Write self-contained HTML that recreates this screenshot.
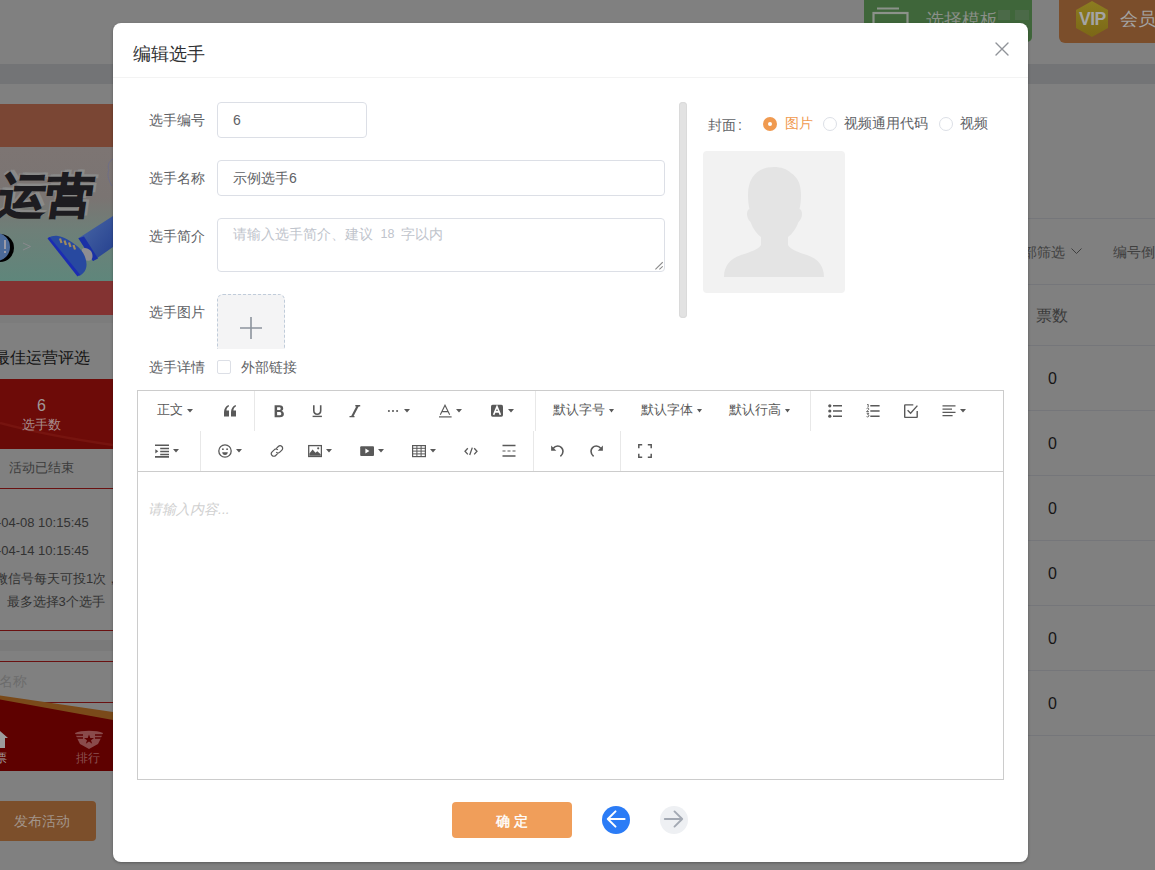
<!DOCTYPE html>
<html><head><meta charset="utf-8">
<style>
*{box-sizing:border-box;margin:0;padding:0}
html,body{width:1155px;height:870px;overflow:hidden}
body{position:relative;background:#808080;font-family:"Liberation Sans",sans-serif;color:#606266}
.a{position:absolute}
.t{position:absolute;white-space:nowrap;line-height:1}
/* background page (already dimmed colours) */
#bg{position:absolute;left:0;top:0;width:1155px;height:870px;overflow:hidden;background:#808080}
#modal{position:absolute;left:113px;top:23px;width:915px;height:839px;background:#fff;border-radius:8px;box-shadow:0 1px 3px rgba(0,0,0,.3);overflow:hidden}
.lbl{left:35.7px;width:56px;text-align:right;font-size:14px;color:#606266}
.inp{border:1px solid #dcdfe6;border-radius:4px;background:#fff}
</style></head>
<body>
<div id="bg">
  <!-- top header band -->
  <div class="a" style="left:0;top:64px;width:1155px;height:20px;background:#737476"></div>
  <!-- green template button -->
  <div class="a" style="left:864px;top:-6px;width:168px;height:48px;background:#3f663a;border-radius:5px"></div>
  <svg class="a" style="left:872px;top:7px" width="37" height="20" viewBox="0 0 37 20"><path d="M5 1.5H27" stroke="#8c928a" stroke-width="2"/><rect x="1.5" y="6" width="34" height="20" stroke="#8c928a" stroke-width="2.2" fill="none"/></svg>
  <div class="t" style="left:926px;top:10.5px;font-size:18px;line-height:18px;color:#8a8f88">选择模板</div>
  <div class="a" style="left:998px;top:10px;width:12px;height:10px;background:#4b6a48"></div>
  <div class="a" style="left:1015px;top:10px;width:14px;height:10px;background:#4b6a48"></div>
  <!-- vip button -->
  <div class="a" style="left:1059px;top:-6px;width:110px;height:49px;background:#7b4e2b;border-radius:6px"></div>
  <svg class="a" style="left:1075px;top:0" width="34" height="38" viewBox="0 0 34 38"><defs><linearGradient id="hx" x1="0" y1="0" x2="0" y2="1"><stop offset="0" stop-color="#8c7d20"/><stop offset="1" stop-color="#7b6716"/></linearGradient></defs><path d="M17 1L33 10V28L17 37L1 28V10Z" fill="url(#hx)"/></svg>
  <div class="t" style="left:1079px;top:10px;font-size:17.5px;line-height:18px;font-weight:bold;color:#a4a4a4;letter-spacing:-0.5px">VIP</div>
  <div class="t" style="left:1120px;top:10px;font-size:18px;line-height:18px;color:#a4a4a4">会员</div>

  <!-- phone preview column -->
  <div class="a" style="left:0;top:104px;width:113px;height:43px;background:#7a4634"></div>
  <div class="a" style="left:0;top:147px;width:113px;height:134px;background:linear-gradient(#7d7573 0%,#7a7472 38%,#6e7f78 62%,#5f867b 100%)"></div>
  <div class="t" style="left:-1px;top:167.5px;font-size:47px;line-height:56px;font-weight:900;color:#1d1c20;-webkit-text-stroke:1.5px #1d1c20;transform:skewX(-8deg);text-shadow:4px -3px 0 #8a8a89,2px -3px 0 #8a8a89,-2px -2px 0 #8a8786">运营</div>
  <div class="a" style="left:-20px;top:234px;width:34px;height:28px;border-radius:14px;background:#000"></div>
  <div class="a" style="left:-24px;top:233px;width:34px;height:28px;border-radius:14px;background:#4c6a99"></div>
  <div class="a" style="left:4px;top:240px;width:2px;height:9px;background:#9a9aa8"></div>
  <div class="a" style="left:4px;top:251px;width:2px;height:2px;background:#9a9aa8"></div>
  <svg class="a" style="left:22px;top:242px" width="10" height="9" viewBox="0 0 10 9"><path d="M1 1L8.5 4.5L1 8" stroke="#8a8a8e" stroke-width="1" fill="none"/></svg>
  <svg class="a" style="left:46px;top:214px" width="67" height="64" viewBox="0 0 67 64"><defs><linearGradient id="pl" x1="0" y1="0" x2="1" y2="1"><stop offset="0" stop-color="#4a68a6"/><stop offset="1" stop-color="#243f8e"/></linearGradient></defs><path d="M32.4 24.3L67 2V33L47 47Z" fill="url(#pl)"/><path d="M32.4 24.3L38 22.5L52 44.5L47 47Z" fill="#1a30a6"/><path d="M36 35C38 33 42 34 45 37C47 40 47 44 45 46C42 48 38 46 36 43Z" fill="#8f8d92"/><path d="M2 24C5 22 9 21.5 12 22C18 23 25 27 31 32C36 36 40 42 40.5 50C40.8 55 38 60 33 62Z" fill="#2849a0"/><path d="M1.5 24.5L3.5 23L34 60.5L31.5 62.5Z" fill="#1b2cb2"/><path d="M14 24.5L15.5 29M18.5 26.5L20 31M23 28.5L24.5 33M27.5 31L29 35.5" stroke="#a08c5c" stroke-width="2.2"/></svg>
  <svg class="a" style="left:106px;top:158px" width="8" height="30" viewBox="0 0 8 30"><path d="M7 1C3 3 1 8 3 12C1 16 2 22 6 28" stroke="#6e6e88" stroke-width="1" fill="none"/></svg>
  <div class="a" style="left:0;top:281px;width:113px;height:34px;background:#833332"></div>
  <div class="a" style="left:0;top:315px;width:113px;height:8px;background:#7c7c7c"></div>
  <div class="t" style="left:-6.5px;top:350px;font-size:16px;color:#141414">最佳运营评选</div>
  <div class="a" style="left:0;top:379px;width:113px;height:70px;background:#6d0b08;overflow:hidden">
    <svg class="a" style="left:0;top:0" width="113" height="70" viewBox="0 0 113 70"><path d="M0 44C30 52 70 60 113 66V70H0Z" fill="#680a07"/><path d="M0 44C30 52 70 60 113 66" stroke="#76140f" stroke-width="2.5" fill="none"/></svg>
  </div>
  <div class="t" style="left:37px;top:398px;font-size:16px;color:#a09898">6</div>
  <div class="t" style="left:22px;top:417.5px;font-size:13px;color:#a88f8d">选手数</div>
  <div class="t" style="left:9px;top:461px;font-size:13px;color:#3c3c3c">活动已结束</div>
  <div class="a" style="left:0;top:488px;width:113px;height:1px;background:#6a1111"></div>
  <div class="t" style="left:-32px;top:516px;font-size:13px;color:#323232">2021-04-08 10:15:45</div>
  <div class="t" style="left:-32px;top:544px;font-size:13px;color:#323232">2021-04-14 10:15:45</div>
  <div class="t" style="left:-5px;top:572px;font-size:13px;color:#323232">微信号每天可投1次，</div>
  <div class="t" style="left:6.5px;top:595px;font-size:13px;color:#323232">最多选择3个选手</div>
  <div class="a" style="left:0;top:630px;width:113px;height:1px;background:#6a1111"></div>
  <div class="a" style="left:0;top:640px;width:113px;height:11px;background:#7a7a7a"></div>
  <div class="a" style="left:0;top:661px;width:113px;height:1px;background:#6a1111"></div>
  <div class="t" style="left:-1px;top:674px;font-size:14px;color:#6c6c6c">名称</div>
  <div class="a" style="left:0;top:702px;width:113px;height:1px;background:#6a1111"></div>
  <svg class="a" style="left:0;top:694px" width="113" height="78" viewBox="0 0 113 78"><path d="M0 1.5L113 18V77H0Z" fill="#7a4a1a"/><path d="M0 5.5L113 26V77H0Z" fill="#5e0100"/></svg>
  <svg class="a" style="left:-8px;top:730px" width="16" height="19" viewBox="0 0 16 19"><path d="M0 8L8 1L16 8H13V18H3V8Z" fill="#9c9c9c"/></svg>
  <svg class="a" style="left:74px;top:730px" width="30" height="20" viewBox="0 0 30 20"><path d="M1 3C7 0 23 0 29 3L27 8L24 14L15 19L6 14L3 8Z" fill="#8a4b4b"/><path d="M1 5H9M2 8H9M21 5H29M21 8H28" stroke="#5e0100" stroke-width="1.3"/><path d="M15 4.5L16.3 8H20L17 10.2L18.2 13.8L15 11.6L11.8 13.8L13 10.2L10 8H13.7Z" fill="#5e0100"/></svg>
  <div class="t" style="left:76px;top:752px;font-size:12px;color:#8c5353">排行</div>
  <div class="t" style="left:-5px;top:752px;font-size:12px;color:#a0a0a0">票</div>
  <div class="a" style="left:-10px;top:801px;width:106px;height:40px;background:#7c4f2b;border-radius:4px"></div>
  <div class="t" style="left:14px;top:814px;font-size:14px;color:#a3958a">发布活动</div>

  <!-- table on right -->
  <div class="a" style="left:1028px;top:218px;width:127px;height:1px;background:#75767a"></div>
  <div class="t" style="left:1009px;top:245px;font-size:14px;color:#3f3f3f">全部筛选</div>
  <svg class="a" style="left:1071px;top:248px" width="11" height="7" viewBox="0 0 11 7"><path d="M0.5 0.5L5.5 5.5L10.5 0.5" stroke="#3f3f3f" stroke-width="1" fill="none"/></svg>
  <div class="t" style="left:1113px;top:245px;font-size:14px;color:#3f3f3f">编号倒序</div>
  <div class="a" style="left:1028px;top:284px;width:127px;height:1px;background:#75767a"></div>
  <div class="t" style="left:1036px;top:308px;font-size:16px;color:#3b3b3b">票数</div>
  <div class="a" style="left:1028px;top:345px;width:127px;height:1px;background:#75767a"></div>
  <div class="t" style="left:1048px;top:371px;font-size:16px;color:#161616">0</div>
  <div class="a" style="left:1028px;top:410px;width:127px;height:1px;background:#75767a"></div>
  <div class="t" style="left:1048px;top:436px;font-size:16px;color:#161616">0</div>
  <div class="a" style="left:1028px;top:475px;width:127px;height:1px;background:#75767a"></div>
  <div class="t" style="left:1048px;top:501px;font-size:16px;color:#161616">0</div>
  <div class="a" style="left:1028px;top:540px;width:127px;height:1px;background:#75767a"></div>
  <div class="t" style="left:1048px;top:566px;font-size:16px;color:#161616">0</div>
  <div class="a" style="left:1028px;top:605px;width:127px;height:1px;background:#75767a"></div>
  <div class="t" style="left:1048px;top:631px;font-size:16px;color:#161616">0</div>
  <div class="a" style="left:1028px;top:670px;width:127px;height:1px;background:#75767a"></div>
  <div class="t" style="left:1048px;top:696px;font-size:16px;color:#161616">0</div>
  <div class="a" style="left:1028px;top:735px;width:127px;height:1px;background:#75767a"></div>
</div>

<div id="modal">
  <div class="t" style="left:20px;top:22px;font-size:18px;line-height:18px;color:#303133">编辑选手</div>
  <svg class="a" style="left:881.6px;top:18.6px" width="14" height="14" viewBox="0 0 14 14"><path d="M1 1L13 13M13 1L1 13" stroke="#909399" stroke-width="1.4" fill="none" stroke-linecap="round"/></svg>
  <div class="a" style="left:0;top:54px;width:915px;height:1px;background:#f3f3f3"></div>

  <!-- form -->
  <div class="t lbl" style="top:90px">选手编号</div>
  <div class="a inp" style="left:104px;top:79px;width:150px;height:36px"><span class="t" style="left:15px;top:10px;font-size:14px;color:#606266">6</span></div>
  <div class="t lbl" style="top:148px">选手名称</div>
  <div class="a inp" style="left:104px;top:137px;width:448px;height:36px"><span class="t" style="left:15px;top:10px;font-size:14px;color:#606266">示例选手6</span></div>
  <div class="t lbl" style="top:206px">选手简介</div>
  <div class="a inp" style="left:104px;top:195px;width:448px;height:54px"><span class="t" style="left:15px;top:8px;font-size:14px;color:#c0c4cc">请输入选手简介、建议</span><span class="t" style="left:162.5px;top:9px;font-size:12.5px;color:#c0c4cc">18</span><span class="t" style="left:182.5px;top:8px;font-size:14px;color:#c0c4cc">字以内</span>
    <svg class="a" style="right:1px;bottom:1px" width="9" height="9" viewBox="0 0 9 9"><path d="M8.7 1.2L1.4 8.4M8.7 5.3L5.4 8.4" stroke="#8a8a8a" stroke-width="1.1"/></svg></div>
  <div class="t lbl" style="top:282px">选手图片</div>
  <div class="a" style="left:104px;top:271px;width:68px;height:55px;overflow:hidden"><div class="a" style="left:0;top:0;width:68px;height:68px;border:1px dashed #c0ccda;border-radius:6px;background:#f4f4f5"></div>
    <svg class="a" style="left:22px;top:22px" width="24" height="24" viewBox="0 0 24 24"><path d="M12 1V23M1 12H23" stroke="#8c939d" stroke-width="1.6"/></svg></div>
  <div class="t lbl" style="top:337px">选手详情</div>
  <div class="a" style="left:104px;top:337px;width:14px;height:14px;border:1px solid #dcdfe6;border-radius:2px;background:#fff"></div>
  <div class="t" style="left:127.7px;top:337px;font-size:14px;color:#606266">外部链接</div>
  <div class="a" style="left:566px;top:79px;width:8px;height:216px;border-radius:4px;background:#e2e2e2;box-shadow:inset 0 0 0 1px #dadada"></div>

  <!-- cover -->
  <div class="t" style="left:595px;top:95px;font-size:14px;color:#606266">封面</div><div class="t" style="left:625px;top:95px;font-size:14px;color:#606266">:</div>
  <div class="a" style="left:650px;top:94px;width:14px;height:14px;border-radius:50%;background:#f09a50"></div>
  <div class="a" style="left:655px;top:99px;width:4px;height:4px;border-radius:50%;background:#fff"></div>
  <div class="t" style="left:672px;top:93px;font-size:14px;color:#f09a50">图片</div>
  <div class="a" style="left:710px;top:94px;width:14px;height:14px;border-radius:50%;border:1px solid #dcdfe6;background:#fff"></div>
  <div class="t" style="left:731px;top:93px;font-size:14px;color:#606266">视频通用代码</div>
  <div class="a" style="left:826px;top:94px;width:14px;height:14px;border-radius:50%;border:1px solid #dcdfe6;background:#fff"></div>
  <div class="t" style="left:847px;top:93px;font-size:14px;color:#606266">视频</div>
  <div class="a" style="left:590px;top:128px;width:142px;height:142px;border-radius:4px;background:#f2f2f2">
    <svg class="a" style="left:0;top:0" width="142" height="142" viewBox="0 0 142 142"><path fill="#e4e4e4" d="M71 16C56 16 45 25 45 44C45 50 45.5 54 46.5 58C43 59 43 67 47.5 71C50 78 54 83 58 86L58 94C55 99 47 101 38 104C26 108 21 116 21 126L121 126C121 116 116 108 104 104C95 101 88 99 85 94L85 86C89 83 93 78 95.5 71C100 67 100 59 96.5 58C97.5 54 98 50 98 44C98 32 94 26 88 22C84 18 78 16 71 16Z"/></svg>
  </div>

  <!-- editor -->
  <div class="a" id="ed" style="left:24px;top:367px;width:867px;height:390px;border:1px solid #ccc">
    <!--TB--><div class="t" style="left:18.5px;top:12px;font-size:13px;line-height:14px;color:#595959">正文</div>
<svg class="a" style="left:49px;top:18px" width="6" height="4" viewBox="0 0 6 4"><path d="M0 0H6L3.0 3.6Z" fill="#595959"/></svg>
<svg class="a" style="left:85px;top:13px" width="14" height="14" viewBox="0 0 14 14"><path fill="#595959" d="M1 12.4V8.2C1 4.6 2.8 2.1 5.6 1L6.1 2.3C4.4 3.1 3.5 4.5 3.4 6.5H6V12.4Z M8 12.4V8.2C8 4.6 9.8 2.1 12.6 1L13.1 2.3C11.4 3.1 10.5 4.5 10.4 6.5H13V12.4Z"/></svg>
<div class="a" style="left:116px;top:0px;width:1px;height:40px;background:#e8e8e8"></div>
<svg class="a" style="left:134px;top:13px" width="14" height="14" viewBox="0 0 14 14"><path fill="#595959" fill-rule="evenodd" d="M2.6 1.3H7.4C10 1.3 11.2 2.5 11.2 4.4C11.2 5.7 10.5 6.5 9.5 6.9C10.9 7.2 11.9 8.3 11.9 10C11.9 12.1 10.4 13.3 7.8 13.3H2.6Z M5.1 3.3V6.1H7C8.2 6.1 8.7 5.6 8.7 4.7C8.7 3.8 8.2 3.3 7 3.3Z M5.1 8V11.3H7.3C8.7 11.3 9.3 10.7 9.3 9.65C9.3 8.6 8.7 8 7.3 8Z"/></svg>
<svg class="a" style="left:172px;top:13px" width="14" height="14" viewBox="0 0 14 14"><path d="M3.8 1.2V6.6C3.8 9 5.2 10.2 7.25 10.2C9.3 10.2 10.7 9 10.7 6.6V1.2" stroke="#595959" stroke-width="1.6" fill="none"/><path d="M2.6 12.4H11.9" stroke="#595959" stroke-width="1.4"/></svg>
<svg class="a" style="left:210px;top:13px" width="14" height="14" viewBox="0 0 14 14"><path d="M7.3 1.8H12.2M1.5 12.6H6.5" stroke="#595959" stroke-width="1.4" fill="none"/><path d="M8.6 1.8H11L5.4 12.6H3Z" fill="#595959"/></svg>
<svg class="a" style="left:248px;top:13px" width="14" height="14" viewBox="0 0 14 14"><circle cx="2.9" cy="7" r="1.05" fill="#595959"/><circle cx="7" cy="7" r="1.05" fill="#595959"/><circle cx="11.1" cy="7" r="1.05" fill="#595959"/></svg>
<svg class="a" style="left:266px;top:18px" width="6" height="4" viewBox="0 0 6 4"><path d="M0 0H6L3.0 3.6Z" fill="#595959"/></svg>
<svg class="a" style="left:300px;top:13px" width="14" height="14" viewBox="0 0 14 14"><path d="M2.3 10.8L7 1.2L11.7 10.8M3.8 7.6H10.2" stroke="#595959" stroke-width="1.1" fill="none"/><path d="M1 12.9H13.6" stroke="#595959" stroke-width="1.2"/></svg>
<svg class="a" style="left:318px;top:18px" width="6" height="4" viewBox="0 0 6 4"><path d="M0 0H6L3.0 3.6Z" fill="#595959"/></svg>
<svg class="a" style="left:352px;top:13px" width="14" height="14" viewBox="0 0 14 14"><rect x="1" y="0.8" width="12" height="11.9" rx="1.6" fill="#595959"/><path d="M3.6 10.9L7 2.6L10.4 10.9M4.9 7.9H9.1" stroke="#fff" stroke-width="1.6" fill="none"/></svg>
<svg class="a" style="left:370px;top:18px" width="6" height="4" viewBox="0 0 6 4"><path d="M0 0H6L3.0 3.6Z" fill="#595959"/></svg>
<div class="a" style="left:397px;top:0px;width:1px;height:40px;background:#e8e8e8"></div>
<div class="t" style="left:415px;top:12px;font-size:13px;line-height:14px;color:#595959">默认字号</div>
<svg class="a" style="left:471px;top:18px" width="5" height="4" viewBox="0 0 5 4"><path d="M0 0H5L2.5 3.6Z" fill="#595959"/></svg>
<div class="t" style="left:503px;top:12px;font-size:13px;line-height:14px;color:#595959">默认字体</div>
<svg class="a" style="left:559px;top:18px" width="5" height="4" viewBox="0 0 5 4"><path d="M0 0H5L2.5 3.6Z" fill="#595959"/></svg>
<div class="t" style="left:591px;top:12px;font-size:13px;line-height:14px;color:#595959">默认行高</div>
<svg class="a" style="left:647px;top:18px" width="5" height="4" viewBox="0 0 5 4"><path d="M0 0H5L2.5 3.6Z" fill="#595959"/></svg>
<div class="a" style="left:672px;top:0px;width:1px;height:40px;background:#e8e8e8"></div>
<svg class="a" style="left:690px;top:13px" width="14" height="14" viewBox="0 0 14 14"><circle cx="1.8" cy="1.8" r="1.6" fill="#595959"/><circle cx="1.8" cy="7" r="1.6" fill="#595959"/><circle cx="1.8" cy="12.2" r="1.6" fill="#595959"/><path d="M5 1.8H14M5 7H14M5 12.2H14" stroke="#595959" stroke-width="1.5"/></svg>
<svg class="a" style="left:728px;top:13px" width="14" height="14" viewBox="0 0 14 14"><path d="M1.2 0.6L2.2 0.3V3.2M0.6 4.6C0.9 4.2 1.4 4.1 1.8 4.1C2.4 4.1 2.8 4.5 2.8 5C2.8 5.8 1.4 6.6 0.6 7.6H2.9M0.7 9.3H2.8L1.7 10.6C2.4 10.6 2.9 11 2.9 11.7C2.9 12.5 2.3 12.9 1.6 12.9C1.2 12.9 0.8 12.8 0.6 12.6" stroke="#595959" stroke-width="0.95" fill="none"/><path d="M4.3 1.8H13.6M4.3 7H13.6M4.3 12.2H13.6" stroke="#595959" stroke-width="1.5"/></svg>
<svg class="a" style="left:766px;top:13px" width="14" height="14" viewBox="0 0 14 14"><path d="M9.3 0.9H1.3C0.9 0.9 0.7 1.1 0.7 1.5V12.8C0.7 13.2 0.9 13.4 1.3 13.4H12.6C13 13.4 13.2 13.2 13.2 12.8V7" stroke="#595959" stroke-width="1.4" fill="none"/><path d="M3.6 6.2L6.6 9.2L13.4 1.6" stroke="#595959" stroke-width="1.4" fill="none"/></svg>
<svg class="a" style="left:804px;top:13px" width="14" height="14" viewBox="0 0 14 14"><path d="M0.5 1.8H13.5M0.5 5.1H10M0.5 8.3H13.5M0.5 11.6H10.6" stroke="#595959" stroke-width="1.2"/></svg>
<svg class="a" style="left:822px;top:18px" width="6" height="4" viewBox="0 0 6 4"><path d="M0 0H6L3.0 3.6Z" fill="#595959"/></svg>
<svg class="a" style="left:17px;top:53px" width="14" height="14" viewBox="0 0 14 14"><path d="M0 1.3H14M5.2 4.5H14M5.2 7.5H14M5.2 10.5H14M0 12.9H14" stroke="#595959" stroke-width="1.6"/><path d="M0.3 5.2L3.3 7.3L0.3 9.4Z" fill="#595959"/></svg>
<svg class="a" style="left:35px;top:58px" width="6" height="4" viewBox="0 0 6 4"><path d="M0 0H6L3.0 3.6Z" fill="#595959"/></svg>
<div class="a" style="left:62px;top:40px;width:1px;height:40px;background:#e8e8e8"></div>
<svg class="a" style="left:80px;top:53px" width="14" height="14" viewBox="0 0 14 14"><circle cx="7" cy="7" r="6.2" stroke="#595959" stroke-width="1.3" fill="none"/><circle cx="4.9" cy="5.2" r="0.9" fill="#595959"/><circle cx="9.1" cy="5.2" r="0.9" fill="#595959"/><path d="M4.2 8.2H9.8C9.8 9.8 8.6 10.9 7 10.9C5.4 10.9 4.2 9.8 4.2 8.2Z" fill="#595959"/></svg>
<svg class="a" style="left:98px;top:58px" width="6" height="4" viewBox="0 0 6 4"><path d="M0 0H6L3.0 3.6Z" fill="#595959"/></svg>
<svg class="a" style="left:132px;top:53px" width="14" height="14" viewBox="0 0 14 14"><path d="M6.2 4.6L8.3 2.5C9.3 1.5 10.9 1.5 11.9 2.5C12.9 3.5 12.9 5.1 11.9 6.1L9.8 8.2C8.8 9.2 7.2 9.2 6.2 8.2M7.8 9.4L5.7 11.5C4.7 12.5 3.1 12.5 2.1 11.5C1.1 10.5 1.1 8.9 2.1 7.9L4.2 5.8C5.2 4.8 6.8 4.8 7.8 5.8" stroke="#595959" stroke-width="1.2" fill="none"/></svg>
<svg class="a" style="left:170px;top:53px" width="14" height="14" viewBox="0 0 14 14"><rect x="0.7" y="1.6" width="12.7" height="10.9" stroke="#595959" stroke-width="1.3" fill="none"/><path d="M1.4 11.8V9.5L4.6 5.6L7.5 8.7L9.3 7.3L12.7 10.2V11.8Z" fill="#595959"/><circle cx="10.2" cy="4.3" r="1.1" fill="#595959"/></svg>
<svg class="a" style="left:188px;top:58px" width="6" height="4" viewBox="0 0 6 4"><path d="M0 0H6L3.0 3.6Z" fill="#595959"/></svg>
<svg class="a" style="left:222px;top:53px" width="14" height="14" viewBox="0 0 14 14"><rect x="0.2" y="2.2" width="13.8" height="9.7" rx="1" fill="#595959"/><path d="M5.4 4.6V9.6L9.4 7.1Z" fill="#fff"/></svg>
<svg class="a" style="left:240px;top:58px" width="6" height="4" viewBox="0 0 6 4"><path d="M0 0H6L3.0 3.6Z" fill="#595959"/></svg>
<svg class="a" style="left:274px;top:53px" width="14" height="14" viewBox="0 0 14 14"><rect x="0.6" y="1.6" width="12.8" height="11" stroke="#595959" stroke-width="1.2" fill="none"/><path d="M0.6 4.3H13.4M0.6 7.1H13.4M0.6 9.9H13.4M4.9 1.6V12.6M9.1 1.6V12.6" stroke="#595959" stroke-width="1"/></svg>
<svg class="a" style="left:292px;top:58px" width="6" height="4" viewBox="0 0 6 4"><path d="M0 0H6L3.0 3.6Z" fill="#595959"/></svg>
<svg class="a" style="left:326px;top:53px" width="14" height="14" viewBox="0 0 14 14"><path d="M3.8 4.2L1 7.3L3.8 10.4M10.2 4.2L13 7.3L10.2 10.4M8.3 3.6L5.7 11" stroke="#595959" stroke-width="1.3" fill="none"/></svg>
<svg class="a" style="left:364px;top:53px" width="14" height="14" viewBox="0 0 14 14"><path d="M0.5 1.5H13.5M0.5 12H13.5" stroke="#595959" stroke-width="1.3"/><path d="M0.5 7H3.5M5.5 7H8.5M10.5 7H13.5" stroke="#595959" stroke-width="1.2"/></svg>
<div class="a" style="left:395px;top:40px;width:1px;height:40px;background:#e8e8e8"></div>
<svg class="a" style="left:413px;top:53px" width="14" height="14" viewBox="0 0 14 14"><path d="M2.3 4.2C3.3 2.9 4.9 2 6.7 2C9.6 2 12 4.4 12 7.3C12 9.3 11 11.1 9.4 12.4" stroke="#595959" stroke-width="1.6" fill="none"/><path d="M0.1 1.5V6.8H5.3Z" fill="#595959"/></svg>
<svg class="a" style="left:451px;top:53px" width="14" height="14" viewBox="0 0 14 14"><path d="M11.7 4.2C10.7 2.9 9.1 2 7.3 2C4.4 2 2 4.4 2 7.3C2 9.3 3 11.1 4.6 12.4" stroke="#595959" stroke-width="1.6" fill="none"/><path d="M13.9 1.5V6.8H8.7Z" fill="#595959"/></svg>
<div class="a" style="left:482px;top:40px;width:1px;height:40px;background:#e8e8e8"></div>
<svg class="a" style="left:500px;top:53px" width="14" height="14" viewBox="0 0 14 14"><path d="M0.8 4.2V0.8H4.2M9.8 0.8H13.2V4.2M13.2 9.8V13.2H9.8M4.2 13.2H0.8V9.8" stroke="#595959" stroke-width="1.5" fill="none"/></svg><!--/TB-->
    <div class="a" style="left:0;top:80px;width:865px;height:1px;background:#ccc"></div>
    <div class="t" style="left:10px;top:111px;font-size:14px;color:#d0d0d0;font-style:italic">请输入内容...</div>
  </div>

  <!-- footer -->
  <div class="a" style="left:339px;top:779px;width:120px;height:36px;border-radius:4px;background:#f09e5a"></div>
  <div class="t" style="left:383px;top:790.5px;font-size:14px;color:#fff;-webkit-text-stroke:0.4px #fff;letter-spacing:4px">确定</div>
  <div class="a" style="left:489px;top:783px;width:28px;height:28px;border-radius:50%;background:#2b7cf6"></div>
  <svg class="a" style="left:489px;top:783px" width="28" height="28" viewBox="0 0 28 28"><path d="M22.6 13H6M13.5 5.4L5.8 13L13.5 20.6" stroke="#fff" stroke-width="2" fill="none" stroke-linecap="round" stroke-linejoin="round"/></svg>
  <div class="a" style="left:547px;top:783px;width:28px;height:28px;border-radius:50%;background:#eef0f3"></div>
  <svg class="a" style="left:547px;top:783px" width="28" height="28" viewBox="0 0 28 28"><path d="M4.8 13H22.2M14.5 5.4L22.2 13L14.5 20.6" stroke="#a3a9b3" stroke-width="1.9" fill="none" stroke-linecap="round" stroke-linejoin="round"/></svg>
</div>
</body></html>
